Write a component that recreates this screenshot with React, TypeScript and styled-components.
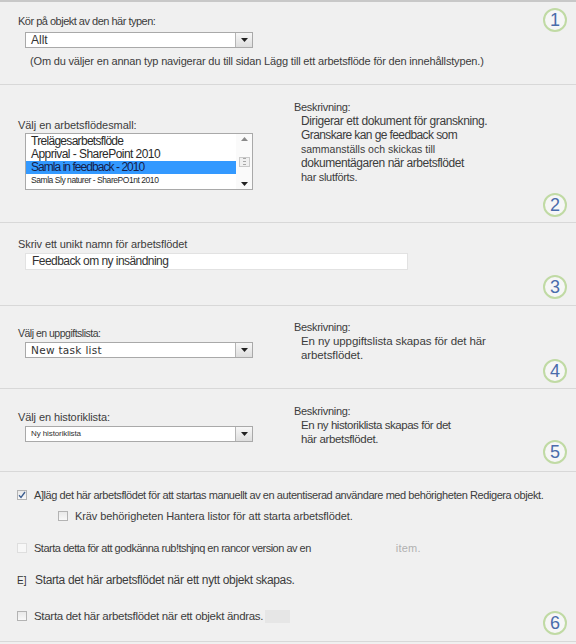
import React from 'react'
import styled, { createGlobalStyle } from 'styled-components'

const GlobalStyle = createGlobalStyle`
  html, body {
    margin: 0;
    padding: 0;
    background: #f0f0f0;
  }
  body {
    font-family: "Liberation Sans", Arial, sans-serif;
    color: #3c3c3c;
  }
`

const Page = styled.div`
  width: 576px;
  height: 644px;
  box-sizing: border-box;
  border-top: 2px solid #c8c8c8;
  overflow: hidden;
`

const Section = styled.section<{ $h: number; $pt?: number }>`
  position: relative;
  box-sizing: border-box;
  height: ${p => p.$h}px;
  padding: ${p => p.$pt ?? 0}px 0 0 18px;
  border-bottom: 1px solid #d8d8d8;
`

const Columns = styled.div`
  display: grid;
  grid-template-columns: 276px 1fr;
  height: 100%;
`

const Column = styled.div<{ $pt: number }>`
  padding-top: ${p => p.$pt}px;
`

const Label = styled.div<{ $size?: number; $ls?: number }>`
  font-size: ${p => p.$size ?? 11}px;
  letter-spacing: ${p => p.$ls ?? -0.5}px;
  line-height: 13px;
  white-space: nowrap;
`

const Note = styled(Label)`
  margin: 7px 0 0 12px;
`

const DescLine = styled.div<{ $size?: number; $ls?: number }>`
  margin-left: 7px;
  font-size: ${p => p.$size ?? 11.5}px;
  letter-spacing: ${p => p.$ls ?? -0.3}px;
  line-height: 14px;
  white-space: nowrap;
`

const Badge = styled.div<{ $top?: number; $bottom?: number }>`
  position: absolute;
  right: 9px;
  ${p => (p.$top !== undefined ? `top: ${p.$top}px;` : `bottom: ${p.$bottom}px;`)}
  width: 24px;
  height: 24px;
  box-sizing: border-box;
  border: 2px solid #c0daa4;
  border-radius: 50%;
  background: #f6f6f6;
  color: #4a6cab;
  font-size: 18px;
  line-height: 20px;
  text-align: center;
`

const SelectBox = styled.div<{ $mt: number }>`
  display: flex;
  box-sizing: border-box;
  width: 228px;
  height: 16px;
  margin: ${p => p.$mt}px 0 0 7px;
  border: 1px solid #a9a9a9;
  background: #fff;
`

const SelectValue = styled.div<{ $font?: string; $size?: number; $ls?: number }>`
  flex: 1;
  padding-left: 5px;
  font-family: ${p => p.$font ?? '"Liberation Sans", Arial, sans-serif'};
  font-size: ${p => p.$size ?? 12}px;
  letter-spacing: ${p => p.$ls ?? 0}px;
  line-height: 14px;
  color: #333;
  white-space: nowrap;
  overflow: hidden;
`

const DropButton = styled.div`
  display: flex;
  align-items: center;
  justify-content: center;
  width: 16px;
  border-left: 1px solid #b5b5b5;
  background: linear-gradient(#f7f7f7, #dedede);
`

const ListBox = styled.div`
  display: flex;
  box-sizing: border-box;
  width: 228px;
  height: 57px;
  margin: 1px 0 0 7px;
  border: 1px solid #a9a9a9;
  background: #fff;
`

const ListItems = styled.div`
  flex: 1;
  padding-top: 1px;
`

const ListItem = styled.div<{ $selected?: boolean; $size?: number; $ls?: number }>`
  height: 13px;
  padding-left: 5px;
  font-size: ${p => p.$size ?? 12}px;
  letter-spacing: ${p => p.$ls ?? -0.2}px;
  line-height: 13px;
  white-space: nowrap;
  color: ${p => (p.$selected ? '#15204a' : '#2a2a2a')};
  background: ${p => (p.$selected ? '#3399ff' : 'transparent')};
`

const ScrollBar = styled.div`
  display: flex;
  flex-direction: column;
  justify-content: space-between;
  align-items: center;
  width: 16px;
  padding: 3px 0;
  box-sizing: border-box;
  background: #fafafa;
`

const Thumb = styled.div`
  display: flex;
  flex-direction: column;
  justify-content: center;
  gap: 2px;
  box-sizing: border-box;
  width: 11px;
  height: 10px;
  padding: 0 3px;
  border: 1px solid #c9c9c9;
  background: #f0f0f0;

  span {
    height: 1px;
    background: #a8a8a8;
  }
`

const TextInput = styled.div`
  box-sizing: border-box;
  width: 383px;
  height: 17px;
  margin: 2px 0 0 7px;
  padding-left: 6px;
  border: 1px solid #e2e2e2;
  background: #fff;
  font-size: 12px;
  letter-spacing: -0.55px;
  line-height: 15px;
  color: #333;
`

const Options = styled.div`
  display: flex;
  flex-direction: column;
  padding-top: 16px;
`

const OptionRow = styled.div<{ $mt?: number; $indent?: number }>`
  display: flex;
  align-items: center;
  height: 14px;
  margin: ${p => p.$mt ?? 0}px 0 0 ${p => p.$indent ?? 0}px;
`

const Check = styled.div<{ $faint?: boolean }>`
  display: flex;
  align-items: center;
  justify-content: center;
  box-sizing: border-box;
  width: 10px;
  height: 10px;
  margin: 0 7px 0 -1px;
  border: 1px solid ${p => (p.$faint ? '#dedede' : '#b3b3b3')};
  background: ${p => (p.$faint ? '#f7f7f7' : 'linear-gradient(#e9e9e9, #f8f8f8)')};
`

const Marker = styled.div`
  width: 18px;
  margin-left: -1px;
  font-size: 10px;
  color: #333;
`

const OptionText = styled.div<{ $size?: number; $ls?: number; $color?: string }>`
  font-size: ${p => p.$size ?? 11}px;
  letter-spacing: ${p => p.$ls ?? -0.4}px;
  line-height: 14px;
  color: ${p => p.$color ?? '#3c3c3c'};
  white-space: nowrap;
`

const Faded = styled.span<{ $gap: number }>`
  margin-left: ${p => p.$gap}px;
  color: #b0b0b0;
  letter-spacing: 0.2px;
`

const Smudge = styled.span`
  display: inline-block;
  width: 25px;
  height: 13px;
  margin-left: 2px;
  vertical-align: middle;
  background: #e6e6e6;
`

const Arrow = ({ up }: { up?: boolean }) => (
  <svg width="7" height="4" viewBox="0 0 7 4">
    <path d={up ? 'M0 4 L3.5 0 L7 4 Z' : 'M0 0 L7 0 L3.5 4 Z'} fill={up ? '#8a8a8a' : '#222'} />
  </svg>
)

const Tick = () => (
  <svg width="8" height="8" viewBox="0 0 8 8">
    <path d="M1 4.3 L3 6.5 L7 1" stroke="#3b5d8f" strokeWidth="1.3" fill="none" />
  </svg>
)

const Select = ({ value, mt, ...rest }: { value: string; mt: number; $font?: string; $size?: number; $ls?: number }) => (
  <SelectBox $mt={mt}>
    <SelectValue {...rest}>{value}</SelectValue>
    <DropButton>
      <Arrow />
    </DropButton>
  </SelectBox>
)

export default function App() {
  return (
    <Page>
      <GlobalStyle />

      <Section $h={83} $pt={13}>
        <Label>Kör på objekt av den här typen:</Label>
        <Select value="Allt" mt={4} $size={12} />
        <Note $ls={-0.17}>
          (Om du väljer en annan typ navigerar du till sidan Lägg till ett arbetsflöde för den innehållstypen.)
        </Note>
        <Badge $top={6}>1</Badge>
      </Section>

      <Section $h={138}>
        <Columns>
          <Column $pt={34}>
            <Label $ls={-0.05}>Välj en arbetsflödesmall:</Label>
            <ListBox>
              <ListItems>
                <ListItem $ls={-0.7}>Trelägesarbetsflöde</ListItem>
                <ListItem $ls={-0.55}>Apprival - SharePoint 2010</ListItem>
                <ListItem $selected $ls={-0.95}>Samla in feedback - 2010</ListItem>
                <ListItem $size={8.5} $ls={-0.45}>Samla Sly naturer - SharePO1nt 2010</ListItem>
              </ListItems>
              <ScrollBar>
                <Arrow up />
                <Thumb>
                  <span />
                  <span />
                  <span />
                </Thumb>
                <Arrow />
              </ScrollBar>
            </ListBox>
          </Column>
          <Column $pt={16}>
            <Label $ls={-0.3}>Beskrivning:</Label>
            <DescLine $size={12} $ls={-0.4}>Dirigerar ett dokument för granskning.</DescLine>
            <DescLine $size={12} $ls={-0.6}>Granskare kan ge feedback som</DescLine>
            <DescLine $size={10.5} $ls={0}>sammanställs och skickas till</DescLine>
            <DescLine $size={12} $ls={-0.45}>dokumentägaren när arbetsflödet</DescLine>
            <DescLine $size={11} $ls={-0.3}>har slutförts.</DescLine>
          </Column>
        </Columns>
        <Badge $bottom={5}>2</Badge>
      </Section>

      <Section $h={83} $pt={15}>
        <Label $ls={-0.1}>Skriv ett unikt namn för arbetsflödet</Label>
        <TextInput>Feedback om ny insändning</TextInput>
        <Badge $bottom={6}>3</Badge>
      </Section>

      <Section $h={83}>
        <Columns>
          <Column $pt={21}>
            <Label $size={10.5} $ls={-0.5}>Välj en uppgiftslista:</Label>
            <Select
              value="New task list"
              mt={2}
              $font='"DejaVu Sans", Verdana, sans-serif'
              $size={10.5}
              $ls={0.3}
            />
          </Column>
          <Column $pt={15}>
            <Label $ls={-0.3}>Beskrivning:</Label>
            <DescLine $ls={-0.1}>En ny uppgiftslista skapas för det här</DescLine>
            <DescLine $ls={-0.1}>arbetsflödet.</DescLine>
          </Column>
        </Columns>
        <Badge $bottom={5}>4</Badge>
      </Section>

      <Section $h={83}>
        <Columns>
          <Column $pt={22}>
            <Label $ls={-0.1}>Välj en historiklista:</Label>
            <Select value="Ny historiklista" mt={2} $size={8} $ls={-0.1} />
          </Column>
          <Column $pt={16}>
            <Label $ls={-0.3}>Beskrivning:</Label>
            <DescLine $size={11.5} $ls={-0.45}>En ny historiklista skapas för det</DescLine>
            <DescLine $size={11.5} $ls={-0.35}>här arbetsflödet.</DescLine>
          </Column>
        </Columns>
        <Badge $bottom={7}>5</Badge>
      </Section>

      <Section $h={170}>
        <Options>
          <OptionRow>
            <Check>
              <Tick />
            </Check>
            <OptionText $ls={-0.43}>
              A]läg det här arbetsflödet för att startas manuellt av en autentiserad användare med behörigheten Redigera objekt.
            </OptionText>
          </OptionRow>
          <OptionRow $mt={7} $indent={41}>
            <Check />
            <OptionText $ls={-0.1}>Kräv behörigheten Hantera listor för att starta arbetsflödet.</OptionText>
          </OptionRow>
          <OptionRow $mt={18}>
            <Check $faint />
            <OptionText $ls={-0.5}>
              Starta detta för att godkänna rub!tshjnq en rancor version av en
              <Faded $gap={85}>item.</Faded>
            </OptionText>
          </OptionRow>
          <OptionRow $mt={18}>
            <Marker>E]</Marker>
            <OptionText $size={12} $ls={-0.35}>Starta det här arbetsflödet när ett nytt objekt skapas.</OptionText>
          </OptionRow>
          <OptionRow $mt={22}>
            <Check />
            <OptionText $size={11.5} $ls={-0.3}>
              Starta det här arbetsflödet när ett objekt ändras.
              <Smudge />
            </OptionText>
          </OptionRow>
        </Options>
        <Badge $bottom={6}>6</Badge>
      </Section>
    </Page>
  )
}
